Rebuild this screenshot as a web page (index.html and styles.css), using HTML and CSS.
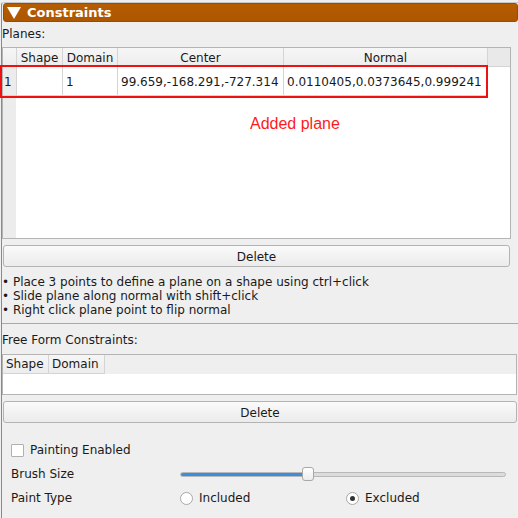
FILE: index.html
```html
<!DOCTYPE html>
<html>
<head>
<meta charset="utf-8">
<link rel="stylesheet" href="styles.css">
</head>
<body>
<div class="panel">
  <div class="titlebar"><span class="tri"></span><span class="title">Constraints</span></div>
  <div class="label planes-label">Planes:</div>
  <div class="table1-wrap">
    <div class="table1">
      <div class="hrow">
        <div class="corner"></div>
        <div class="hcell c-shape">Shape</div>
        <div class="hcell c-domain">Domain</div>
        <div class="hcell c-center">Center</div>
        <div class="hcell c-normal">Normal</div>
        <div class="hfill"></div>
      </div>
      <div class="body1">
        <div class="drow">
          <div class="vhead">1</div>
          <div class="dcell c-shape"></div>
          <div class="dcell c-domain">1</div>
          <div class="dcell c-center">99.659,-168.291,-727.314</div>
          <div class="dcell c-normal">0.0110405,0.0373645,0.999241</div>
        </div>
        <div class="rest1">
          <div class="vstrip"></div>
          <div class="annot">Added plane</div>
        </div>
      </div>
    </div>
    <div class="redbox"></div>
  </div>
  <div class="btn btn1">Delete</div>
  <div class="hints">
    <div>• Place 3 points to define a plane on a shape using ctrl+click</div>
    <div>• Slide plane along normal with shift+click</div>
    <div>• Right click plane point to flip normal</div>
  </div>
  <div class="sep"></div>
  <div class="label ff-label">Free Form Constraints:</div>
  <div class="table2">
    <div class="hrow2">
      <div class="hcell2 c2-shape">Shape</div>
      <div class="hcell2 c2-domain">Domain</div>
    </div>
    <div class="body2"></div>
  </div>
  <div class="btn btn2">Delete</div>
  <div class="paint">
    <div class="prow check-row">
      <span class="checkbox"></span><span>Painting Enabled</span>
    </div>
    <div class="prow">
      <span class="plabel">Brush Size</span>
      <div class="slider">
        <div class="groove"><div class="fill"></div></div>
        <div class="handle"></div>
      </div>
    </div>
    <div class="prow">
      <span class="plabel">Paint Type</span>
      <div class="radios">
        <div class="radio-opt r1"><span class="radio"></span><span>Included</span></div>
        <div class="radio-opt"><span class="radio checked"></span><span>Excluded</span></div>
      </div>
    </div>
  </div>
</div>
</body>
</html>
```
FILE: styles.css
```css
html, body {
  margin: 0;
  padding: 0;
  background: #efefef;
}
body {
  font-family: "DejaVu Sans", sans-serif;
  font-size: 12px;
  color: #1a1a1a;
  width: 518px;
  height: 518px;
  overflow: hidden;
}
.panel {
  margin: 2px 0 0 1px;
  border-left: 1px solid #8a8a8a;
  border-top: 1px solid #c8c8c8;
  border-top-left-radius: 3px;
  height: 520px;
  box-sizing: border-box;
}
.titlebar {
  height: 19px;
  background: linear-gradient(#b65d02, #ad5600);
  border: 1px solid #9a4c00;
  border-radius: 3px;
  display: flex;
  align-items: center;
  color: #fff;
  font-weight: bold;
  font-size: 13px;
  box-sizing: border-box;
  width: 515px;
  margin-left: 1px;
}
.tri {
  width: 0;
  height: 0;
  border-left: 7px solid transparent;
  border-right: 7px solid transparent;
  border-top: 12px solid #fff;
  margin-left: 3px;
  margin-right: 6px;
}
.title {
  line-height: 19px;
}
.label {
  line-height: 14px;
}
.planes-label {
  padding: 5px 0 6px 0;
}
.table1-wrap {
  position: relative;
  width: 509px;
}
.table1 {
  border: 1px solid #b4b4b4;
  height: 192px;
  box-sizing: border-box;
  background: #fff;
  display: flex;
  flex-direction: column;
}
.hrow {
  display: flex;
  height: 19px;
  background: linear-gradient(#f6f6f6, #ececec);
  flex: none;
}
.corner {
  width: 13px;
  border-right: 1px solid #d4d4d4;
  border-bottom: 1px solid #d4d4d4;
}
.hcell {
  border-right: 1px solid #d4d4d4;
  border-bottom: 1px solid #d4d4d4;
  text-align: center;
  line-height: 18px;
  padding-top: 1px;
  box-sizing: border-box;
}
.hfill {
  flex: 1;
  background: #e9e9e9;
  border-bottom: 1px solid #d4d4d4;
}
.c-shape { width: 46px; }
.c-domain { width: 55px; }
.c-center { width: 166px; }
.c-normal { width: 204px; }
.body1 {
  flex: 1;
  display: flex;
  flex-direction: column;
}
.drow {
  display: flex;
  height: 29px;
  flex: none;
}
.vhead {
  background: #ececec;
  border-right: 1px solid #d4d4d4;
  border-bottom: 1px solid #d4d4d4;
  padding-left: 1px;
  line-height: 30px;
  width: 12px;
}
.dcell {
  border-right: 1px solid #d4d4d4;
  border-bottom: 1px solid #d4d4d4;
  box-sizing: border-box;
  line-height: 30px;
  padding-left: 3px;
}
.rest1 {
  flex: 1;
  display: flex;
}
.vstrip {
  width: 13px;
  background: #ececec;
}
.annot {
  font-family: "Liberation Sans", Arial, sans-serif;
  font-size: 16px;
  color: #ff1a1a;
  margin: 19px 0 0 234px;
  line-height: 18px;
  height: 18px;
}
.redbox {
  position: absolute;
  left: -2px;
  top: 18px;
  width: 488px;
  height: 33px;
  border: 2px solid #f01010;
  box-sizing: border-box;
}
.btn {
  height: 22px;
  border: 1px solid #b4b4b4;
  border-radius: 3px;
  background: linear-gradient(#fafafa, #ebebeb);
  text-align: center;
  line-height: 22px;
  box-sizing: border-box;
  margin-left: 1px;
}
.btn1 {
  margin-top: 6px;
  width: 507px;
}
.hints {
  margin-top: 8px;
  line-height: 14px;
  padding-bottom: 6px;
}
.sep {
  height: 1px;
  background: #a8a8a8;
  margin-right: -2px;
}
.ff-label {
  padding: 9px 0 7px 0;
}
.table2 {
  width: 515px;
  height: 41px;
  border: 1px solid #b4b4b4;
  box-sizing: border-box;
  display: flex;
  flex-direction: column;
}
.hrow2 {
  display: flex;
  height: 19px;
  flex: none;
}
.hcell2 {
  background: linear-gradient(#f6f6f6, #ececec);
  border-right: 1px solid #d4d4d4;
  border-bottom: 1px solid #d4d4d4;
  line-height: 18px;
  padding-left: 3px;
  box-sizing: border-box;
}
.c2-shape { width: 46px; }
.c2-domain { width: 56px; }
.body2 {
  flex: 1;
  background: #fff;
}
.btn2 {
  margin-top: 6px;
  width: 514px;
}
.paint {
  padding: 20px 0 0 9px;
  display: flex;
  flex-direction: column;
  gap: 10px;
}
.prow {
  display: flex;
  align-items: center;
  height: 14px;
}
.check-row {
  gap: 6px;
}
.checkbox {
  width: 13px;
  height: 13px;
  border: 1px solid #b0b0b0;
  background: #fff;
  box-sizing: border-box;
  border-radius: 1px;
}
.plabel {
  width: 169px;
}
.slider {
  position: relative;
  width: 326px;
  height: 14px;
  display: flex;
  align-items: center;
}
.groove {
  width: 100%;
  height: 5px;
  border: 1px solid #b8b8b8;
  background: #dcdcdc;
  border-radius: 3px;
  box-sizing: border-box;
  overflow: hidden;
}
.fill {
  width: 124px;
  height: 100%;
  background: #3a8ee0;
  border-right: 1px solid #1f5d99;
}
.handle {
  position: absolute;
  left: 122px;
  top: 0;
  width: 12px;
  height: 14px;
  border: 1px solid #a8a8a8;
  border-radius: 3px;
  background: linear-gradient(#ffffff, #ececec);
  box-sizing: border-box;
}
.radios {
  display: flex;
}
.radio-opt {
  display: flex;
  align-items: center;
  gap: 6px;
}
.r1 {
  width: 166px;
}
.radio {
  width: 13px;
  height: 13px;
  border: 1px solid #a8a8a8;
  border-radius: 50%;
  background: #fff;
  box-sizing: border-box;
  display: flex;
  align-items: center;
  justify-content: center;
}
.radio.checked::after {
  content: "";
  width: 5px;
  height: 5px;
  border-radius: 50%;
  background: #333;
}
```
